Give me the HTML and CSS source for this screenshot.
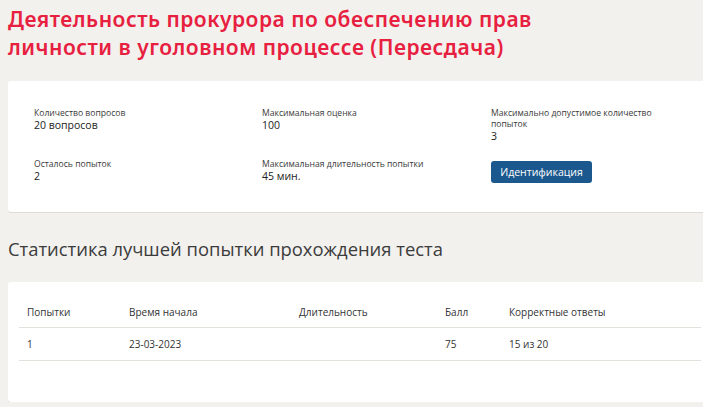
FILE: index.html
```html
<!DOCTYPE html>
<html lang="ru">

<head>
    <meta charset="UTF-8">
    <meta name="viewport" content="width=device-width, initial-scale=1.0">
    <title>Тест</title>
    <link rel="stylesheet" href="styles.css">
</head>

<body>
    <div class="page">
        <h1 class="title">Деятельность прокурора по обеспечению прав личности в уголовном процессе (Пересдача)</h1>

        <div class="card info">
            <div class="info-grid">
                <div class="item">
                    <div class="label">Количество вопросов</div>
                    <div class="value">20 вопросов</div>
                </div>
                <div class="item">
                    <div class="label">Максимальная оценка</div>
                    <div class="value">100</div>
                </div>
                <div class="item narrow">
                    <div class="label">Максимально допустимое количество попыток</div>
                    <div class="value">3</div>
                </div>
                <div class="item">
                    <div class="label">Осталось попыток</div>
                    <div class="value">2</div>
                </div>
                <div class="item">
                    <div class="label">Максимальная длительность попытки</div>
                    <div class="value">45 мин.</div>
                </div>
                <div class="item">
                    <button class="btn">Идентификация</button>
                </div>
            </div>
        </div>

        <h2 class="subtitle">Статистика лучшей попытки прохождения теста</h2>

        <div class="card stats">
            <table class="table">
                <thead>
                    <tr>
                        <th class="col-1">Попытки</th>
                        <th class="col-2">Время начала</th>
                        <th class="col-3">Длительность</th>
                        <th class="col-4">Балл</th>
                        <th>Корректные ответы</th>
                    </tr>
                </thead>
                <tbody>
                    <tr>
                        <td>1</td>
                        <td>23-03-2023</td>
                        <td></td>
                        <td>75</td>
                        <td>15 из 20</td>
                    </tr>
                </tbody>
            </table>
        </div>
    </div>
</body>

</html>
```

FILE: styles.css
```css
body {
    font-family: "Open Sans", "Noto Sans", sans-serif;
    margin: 0;
    background-color: #f2f1ee;
    color: #333;
    overflow: hidden;
}

.page {
    width: 704px;
    padding: 0 0 0 8px;
}

.title {
    margin: 0;
    padding-top: 5px;
    font-family: "Noto Sans", sans-serif;
    font-size: 21px;
    font-weight: 600;
    line-height: 28px;
    letter-spacing: 0.5px;
    color: #e8203f;
    width: 570px;
}

.card {
    background: #fff;
    border-radius: 3px;
    box-shadow: 0 1px 0 #dddcd7;
}

.info {
    margin-top: 20px;
    padding: 27px 26px 26px;
    height: 78px;
}

.info-grid {
    display: grid;
    grid-template-columns: 228px 229px 200px;
    row-gap: 12px;
}

.item {
    min-height: 39px;
}

.narrow {
    width: 170px;
}

.label {
    font-size: 8.6px;
    line-height: 11px;
    color: #3a3a3a;
}

.value {
    font-size: 10.5px;
    line-height: 12px;
    color: #222;
}

.btn {
    font-family: "Open Sans", sans-serif;
    font-size: 10.5px;
    color: #fff;
    background: #1a588d;
    border: none;
    border-radius: 3px;
    width: 101px;
    height: 22px;
    padding: 0;
    cursor: pointer;
}

.subtitle {
    margin: 25px 0 0;
    font-size: 18.4px;
    font-weight: 400;
    line-height: 24px;
    color: #3b3b3b;
}

.stats {
    margin-top: 21px;
    padding: 15px 11px 41px;
}

.table {
    width: 100%;
    border-collapse: collapse;
    font-size: 10px;
    color: #333;
}

.table th,
.table td {
    text-align: left;
    font-weight: 400;
    padding: 0 8px;
    border-bottom: 1px solid #e2e1dc;
}

.table th {
    height: 30px;
}

.table td {
    height: 32px;
}

.col-1 { width: 86px; }
.col-2 { width: 154px; }
.col-3 { width: 130px; }
.col-4 { width: 48px; }
```
